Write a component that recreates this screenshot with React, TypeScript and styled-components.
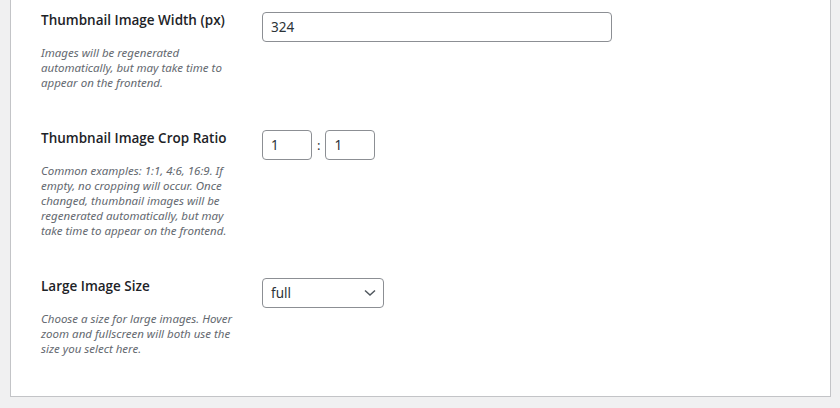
import React from 'react';
import styled, { createGlobalStyle } from 'styled-components';

const GlobalStyle = createGlobalStyle`
  html, body {
    margin: 0;
    padding: 0;
    background: #f0f0f1;
  }
  body {
    font-family: "Noto Sans", "Open Sans", Arial, sans-serif;
    color: #1d2327;
  }
`;

const Page = styled.div`
  padding: 0 9px 11px 10px;
  height: 408px;
  box-sizing: border-box;
`;

const Panel = styled.div`
  background: #fff;
  border: 1px solid #c3c4c7;
  border-top: none;
  padding: 11px 30px 1px 30px;
`;

const Row = styled.div`
  display: flex;
  gap: 21px;
  padding-bottom: 39px;
`;

const Header = styled.div`
  width: 200px;
  flex-shrink: 0;
`;

const Label = styled.div`
  font-family: "Open Sans", "Noto Sans", Arial, sans-serif;
  font-size: 13.5px;
  font-weight: 600;
  line-height: 18px;
  color: #1d2327;
`;

const Description = styled.p`
  margin: 16px 0 0;
  font-size: 11.5px;
  font-style: italic;
  line-height: 15px;
  color: #646970;
`;

const Control = styled.div`
  display: flex;
  align-items: center;
  gap: 5px;
  margin-top: 1px;
  height: 30px;
`;

const TextInput = styled.input<{ $width: number }>`
  width: ${({ $width }) => $width}px;
  height: 30px;
  box-sizing: border-box;
  border: 1px solid #8c8f94;
  border-radius: 4px;
  padding: 0 8px;
  font-family: "Noto Sans", "Open Sans", Arial, sans-serif;
  font-size: 13.5px;
  color: #2c3338;
  background: #fff;
  outline: none;
`;

const Colon = styled.span`
  font-size: 13px;
  color: #2c3338;
`;

const SelectBox = styled.div`
  width: 122px;
  height: 30px;
  box-sizing: border-box;
  border: 1px solid #8c8f94;
  border-radius: 4px;
  padding: 0 8px;
  display: flex;
  align-items: center;
  justify-content: space-between;
  font-size: 13.5px;
  color: #2c3338;
  background: #fff;
`;

const Chevron = () => (
  <svg width="14" height="8" viewBox="0 0 14 8" style={{ marginRight: -2 }}>
    <polyline points="2,1.5 7,6 12,1.5" fill="none" stroke="#50575e" strokeWidth="1.5" />
  </svg>
);

const App = () => (
  <>
    <GlobalStyle />
    <Page>
      <Panel>
        <Row>
          <Header>
            <Label>Thumbnail Image Width (px)</Label>
            <Description>
              Images will be regenerated automatically, but may take time to appear on the frontend.
            </Description>
          </Header>
          <Control>
            <TextInput $width={350} defaultValue="324" />
          </Control>
        </Row>
        <Row>
          <Header>
            <Label>Thumbnail Image Crop Ratio</Label>
            <Description>
              Common examples: 1:1, 4:6, 16:9. If empty, no cropping will occur. Once changed,
              thumbnail images will be regenerated automatically, but may take time to appear on
              the frontend.
            </Description>
          </Header>
          <Control>
            <TextInput $width={50} defaultValue="1" />
            <Colon>:</Colon>
            <TextInput $width={50} defaultValue="1" />
          </Control>
        </Row>
        <Row>
          <Header>
            <Label>Large Image Size</Label>
            <Description>
              Choose a size for large images. Hover zoom and fullscreen will both use the size you
              select here.
            </Description>
          </Header>
          <Control>
            <SelectBox>
              <span>full</span>
              <Chevron />
            </SelectBox>
          </Control>
        </Row>
      </Panel>
    </Page>
  </>
);

export default App;
